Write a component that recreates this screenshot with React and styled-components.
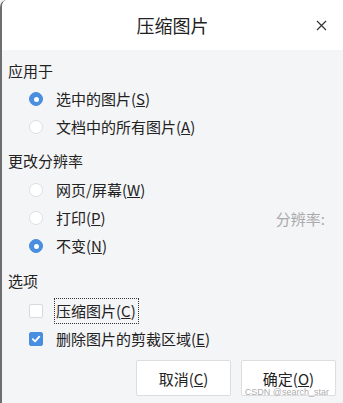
import React from 'react';
import styled, { createGlobalStyle } from 'styled-components';

const GlobalStyle = createGlobalStyle`
  html, body {
    margin: 0;
    padding: 0;
    background: #f4f5f7;
  }
  body {
    font-family: "Noto Sans CJK SC", "Noto Sans", sans-serif;
    color: #222;
  }
`;

const Dialog = styled.div`
  position: relative;
  width: 343px;
  height: 403px;
  box-sizing: border-box;
  border-left: 2px solid #6e6e6e;
  border-top-left-radius: 7px;
  background: #f4f5f7;
  overflow: hidden;
`;

const Header = styled.div`
  position: relative;
  height: 50px;
  background: #fff;
  display: flex;
  align-items: center;
  justify-content: center;
`;

const Title = styled.div`
  font-size: 18px;
  line-height: 22px;
  color: #222;
`;

const CloseButton = styled.button`
  position: absolute;
  right: 15px;
  top: 18px;
  width: 14px;
  height: 14px;
  padding: 0;
  border: none;
  background: transparent;
  display: flex;
  align-items: center;
  justify-content: center;
`;

const Body = styled.div`
  padding: 10px 7px 0 6px;
`;

const Heading = styled.div`
  font-size: 15px;
  line-height: 22px;
  margin-top: ${(p) => p.$top || 0}px;
`;

const List = styled.div`
  margin-top: ${(p) => p.$top || 3}px;
`;

const Row = styled.div`
  display: flex;
  align-items: center;
  height: 28px;
  padding-left: 21px;
  font-size: 15px;
`;

const Radio = styled.span`
  width: 14px;
  height: 14px;
  box-sizing: border-box;
  border-radius: 50%;
  flex: none;
  display: flex;
  align-items: center;
  justify-content: center;
  background: ${(p) => (p.$checked ? '#4a8ee0' : '#fff')};
  border: 1px solid ${(p) => (p.$checked ? '#4a8ee0' : '#dedfe2')};

  &::after {
    content: '';
    width: 5px;
    height: 5px;
    border-radius: 50%;
    background: #fff;
    display: ${(p) => (p.$checked ? 'block' : 'none')};
  }
`;

const Box = styled.span`
  width: 14px;
  height: 14px;
  box-sizing: border-box;
  border-radius: 2px;
  flex: none;
  display: flex;
  align-items: center;
  justify-content: center;
  background: ${(p) => (p.$checked ? '#4a8ee0' : '#fff')};
  border: 1px solid ${(p) => (p.$checked ? '#4a8ee0' : '#d8d9dc')};
`;

const Label = styled.span`
  margin-left: ${(p) => (p.$focus ? 11 : 13)}px;
  line-height: 22px;
  padding: ${(p) => (p.$focus ? '1px 2px 1px 1px' : '0')};
  border: ${(p) => (p.$focus ? '1px dotted #333' : 'none')};
  white-space: nowrap;
`;

const Side = styled.span`
  margin-left: auto;
  margin-right: 11px;
  color: #a9a9a9;
  font-size: 15px;
`;

const Footer = styled.div`
  display: flex;
  justify-content: flex-end;
  gap: 10px;
  margin-top: 7px;
`;

const Button = styled.button`
  width: 95px;
  height: 36px;
  box-sizing: border-box;
  background: #fff;
  border: 1px solid #dcdde0;
  border-radius: 2px;
  font-family: inherit;
  font-size: 15px;
  color: #222;
  padding: 0;
`;

const Watermark = styled.div`
  position: absolute;
  right: 14px;
  bottom: 6px;
  font-family: "Liberation Sans", sans-serif;
  font-size: 9px;
  color: rgba(150, 150, 150, 0.8);
  pointer-events: none;
`;

const Check = () => (
  <svg width="10" height="10" viewBox="0 0 10 10">
    <path d="M1.8 5.2 L4.1 7.4 L8.3 2.6" fill="none" stroke="#fff" strokeWidth="1.8" strokeLinecap="round" strokeLinejoin="round" />
  </svg>
);

const RadioRow = ({ checked, text, k, children }) => (
  <Row>
    <Radio $checked={checked} />
    <Label>
      {text}(<u>{k}</u>)
    </Label>
    {children}
  </Row>
);

export default function App() {
  return (
    <>
      <GlobalStyle />
      <Dialog>
        <Header>
          <Title>压缩图片</Title>
          <CloseButton>
            <svg width="11" height="11" viewBox="0 0 11 11">
              <path d="M1 1 L10 10 M10 1 L1 10" stroke="#333" strokeWidth="1.2" />
            </svg>
          </CloseButton>
        </Header>
        <Body>
          <Heading>应用于</Heading>
          <List>
            <RadioRow checked text="选中的图片" k="S" />
            <RadioRow text="文档中的所有图片" k="A" />
          </List>

          <Heading $top={9}>更改分辨率</Heading>
          <List $top={4}>
            <RadioRow text="网页/屏幕" k="W" />
            <RadioRow text="打印" k="P">
              <Side>分辨率:</Side>
            </RadioRow>
            <RadioRow checked text="不变" k="N" />
          </List>

          <Heading $top={10}>选项</Heading>
          <List $top={5}>
            <Row>
              <Box />
              <Label $focus>
                压缩图片(<u>C</u>)
              </Label>
            </Row>
            <Row>
              <Box $checked>
                <Check />
              </Box>
              <Label>
                删除图片的剪裁区域(<u>E</u>)
              </Label>
            </Row>
          </List>

          <Footer>
            <Button>
              取消(<u>C</u>)
            </Button>
            <Button>
              确定(<u>O</u>)
            </Button>
          </Footer>
        </Body>
        <Watermark>CSDN @search_star</Watermark>
      </Dialog>
    </>
  );
}
